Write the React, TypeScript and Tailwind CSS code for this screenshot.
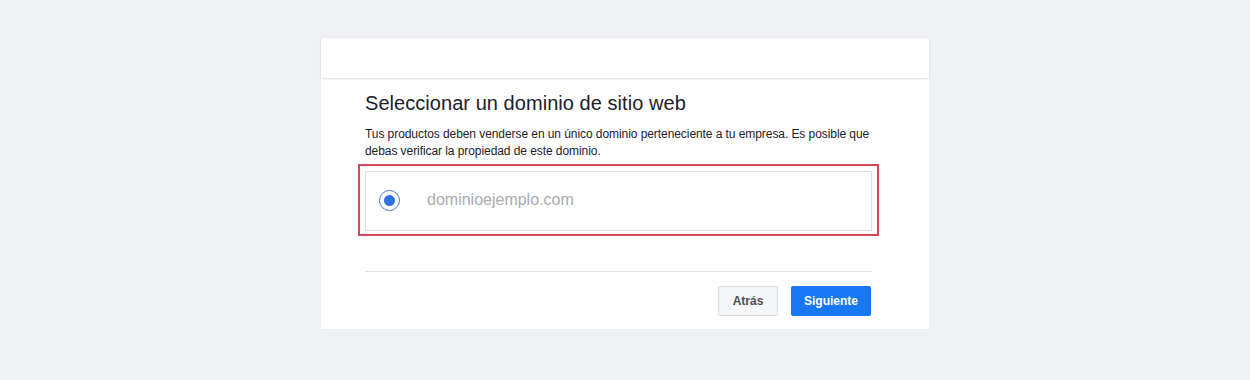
import React from "react";

export default function App() {
  return (
    <div
      className="w-[1250px] h-[380px] bg-[#f0f1f4] pt-[38px]"
      style={{ fontFamily: '"Liberation Sans", Arial, sans-serif' }}
    >
      <div className="mx-auto w-[608px] bg-white shadow-[0_0_1px_rgba(0,0,0,0.05)]">
        <div className="h-[40px] bg-white shadow-[0_1px_2px_rgba(0,0,0,0.12)] relative z-10" />
        <div className="pl-[44px] pt-[13px] pb-[13px] w-[551px]">
          <div className="text-[20px] leading-[24px] text-[#1d2129] tracking-[0.05px]">
            Seleccionar un dominio de sitio web
          </div>
          <p className="mt-[11px] text-[12px] leading-[17px] text-[#1d2129] whitespace-nowrap tracking-[-0.07px]">
            Tus productos deben venderse en un único dominio perteneciente a tu empresa. Es posible que
            <br />
            debas verificar la propiedad de este dominio.
          </p>
          <div className="mt-[4px] -mx-[7px] border-2 border-[#d34a5c] pt-[5px] pb-[3px] px-[5px]">
            <div className="h-[60px] border border-[#dddfe2] flex items-center">
              <div className="ml-[13px] w-[21px] h-[21px] rounded-full border border-[#4a7bd0] flex items-center justify-center mb-[1px]">
                <div className="w-[11px] h-[11px] rounded-full bg-[#2f6fe0]" />
              </div>
              <span className="ml-[27px] text-[16px] leading-[20px] text-[#a9abaf] mb-[2px]">
                dominioejemplo.com
              </span>
            </div>
          </div>
          <div className="mt-[35px] h-px bg-[#dddfe2]" />
          <div className="mt-[14px] flex justify-end">
            <button className="h-[30px] w-[60px] rounded-[2px] border border-[#dadde1] bg-[#f5f6f7] text-[12px] font-bold text-[#4b4f56]">
              Atrás
            </button>
            <button className="ml-[13px] h-[30px] w-[80px] rounded-[2px] bg-[#1877f2] text-[12px] font-bold text-white mr-px">
              Siguiente
            </button>
          </div>
        </div>
      </div>
    </div>
  );
}
